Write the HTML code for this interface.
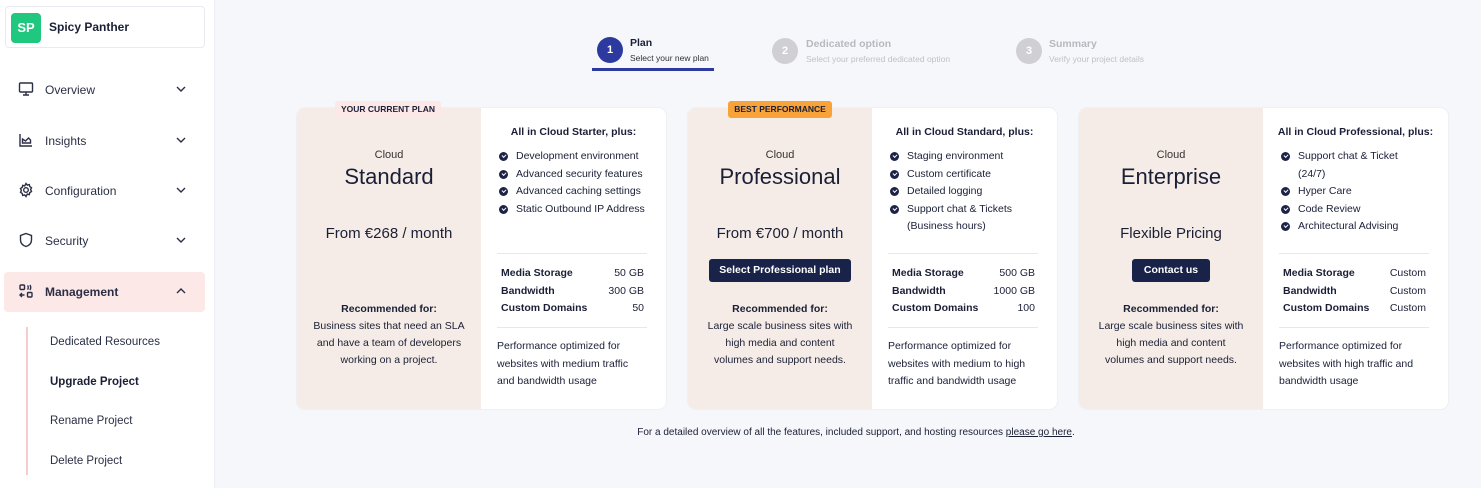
<!DOCTYPE html>
<html><head><style>
*{margin:0;padding:0;box-sizing:border-box}
body{width:1481px;height:488px;overflow:hidden;background:#f6f7fb;font-family:"Liberation Sans",sans-serif;color:#1a1f36;position:relative}
.abs{position:absolute}
.side{position:absolute;left:0;top:0;width:215px;height:488px;background:#fff;border-right:1px solid #eceef3}
.brand{position:absolute;left:5px;top:6px;width:200px;height:42px;border:1px solid #e8eaf0;border-radius:4px}
.sp{position:absolute;left:5px;top:6px;width:30px;height:30px;background:#20c77f;border-radius:4px;color:#fff;font-weight:bold;font-size:13px;text-align:center;line-height:30px}
.brand b{position:absolute;left:43px;top:13px;font-size:12px}
.nav{position:absolute;left:4px;width:201px;height:40px;font-size:12px;color:#2a2f45}
.nav .t{position:absolute;left:41px;top:13px}
.nav svg.i{position:absolute;left:14px;top:11px}
.nav svg.c{position:absolute;left:172px;top:15px}
.sub{position:absolute;left:50px;font-size:11.5px;color:#2a2f45}
.card{position:absolute;top:108px;width:369px;height:301px;border-radius:8px;background:#fff;overflow:visible;box-shadow:0 0 0 1px #eef0f4}
.lp{position:absolute;left:0;top:0;width:184px;height:301px;background:#f5ece7;border-radius:8px 0 0 8px;text-align:center}
.rp{position:absolute;left:184px;top:0;width:185px;height:301px;font-size:10.5px}
.cl{position:absolute;left:0;width:184px;top:41px;font-size:11px;color:#333}
.ti{position:absolute;left:0;width:184px;top:56px;font-size:22px;color:#1a1f36}
.pr{position:absolute;left:0;width:184px;top:117px;font-size:15px;color:#1a1f36}
.rec{position:absolute;left:0;width:184px;top:193px;font-size:10.5px;line-height:17px;color:#1a1f36}
.btn{position:absolute;top:151px;height:23px;background:#192349;color:#fff;font-weight:bold;font-size:10.5px;line-height:23px;border-radius:3px;text-align:center}
.h{position:absolute;left:0;width:185px;text-align:center;top:18px;font-weight:bold;font-size:10.5px}
ul{position:absolute;left:18px;top:40px;list-style:none;line-height:17.5px}
li{padding-left:17px;position:relative}
li:before{content:"";position:absolute;left:0;top:4px;width:9px;height:9px;border-radius:50%;background:#1c2346}
li:after{content:"";position:absolute;left:2.5px;top:6px;width:3px;height:2px;border-left:1.3px solid #fff;border-bottom:1.3px solid #fff;transform:rotate(-45deg)}
.dv{position:absolute;left:16px;width:150px;height:1px;background:#e8e8ec}
.sp2{position:absolute;left:20px;width:143px;top:157px;line-height:17.5px}
.sp2 div{display:flex;justify-content:space-between}
.sp2 span:first-child{font-weight:bold}
.pf{position:absolute;left:16px;top:230px;width:150px;line-height:17.5px}
.badge{position:absolute;top:-7px;height:17px;font-size:8.5px;font-weight:bold;line-height:17px;text-align:center;border-radius:3px}
</style></head><body>
<div class="side">
 <div class="brand"><div class="sp">SP</div><b>Spicy Panther</b></div>
 <div class="nav" style="top:70px"><svg class="i" width="16" height="16" viewBox="0 0 16 16" fill="none" stroke="#2a2f45" stroke-width="1.4"><rect x="1.5" y="2" width="13" height="9" rx="1"/><path d="M8 11v3M5 14h6"/></svg><span class="t">Overview</span><svg class="c" width="10" height="8" viewBox="0 0 10 8" fill="none" stroke="#2a2f45" stroke-width="1.4"><path d="M1 2l4 4 4-4"/></svg></div>
 <div class="nav" style="top:121px"><svg class="i" width="16" height="16" viewBox="0 0 16 16" fill="none" stroke="#2a2f45" stroke-width="1.4"><path d="M2 2v12h12M4.5 11V7l3 2 3-3 2 2v3z"/></svg><span class="t">Insights</span><svg class="c" width="10" height="8" viewBox="0 0 10 8" fill="none" stroke="#2a2f45" stroke-width="1.4"><path d="M1 2l4 4 4-4"/></svg></div>
 <div class="nav" style="top:171px"><svg class="i" width="16" height="16" viewBox="0 0 16 16" fill="none" stroke="#2a2f45" stroke-width="1.4"><circle cx="8" cy="8" r="2.3"/><path d="M8 1.5l1.3 1.6 2-.5.5 2 1.7 1.1-.9 1.9.9 1.9-1.7 1.1-.5 2-2-.5L8 14.5l-1.3-1.6-2 .5-.5-2-1.7-1.1.9-1.9-.9-1.9 1.7-1.1.5-2 2 .5z"/></svg><span class="t">Configuration</span><svg class="c" width="10" height="8" viewBox="0 0 10 8" fill="none" stroke="#2a2f45" stroke-width="1.4"><path d="M1 2l4 4 4-4"/></svg></div>
 <div class="nav" style="top:221px"><svg class="i" width="16" height="16" viewBox="0 0 16 16" fill="none" stroke="#2a2f45" stroke-width="1.4"><path d="M8 1.5l5.5 2v4.5c0 3.5-2.5 5.5-5.5 6.5-3-1-5.5-3-5.5-6.5V3.5z"/></svg><span class="t">Security</span><svg class="c" width="10" height="8" viewBox="0 0 10 8" fill="none" stroke="#2a2f45" stroke-width="1.4"><path d="M1 2l4 4 4-4"/></svg></div>
 <div class="nav" style="top:272px;background:#fde8e8;border-radius:4px"><svg class="i" width="16" height="16" viewBox="0 0 16 16" fill="none" stroke="#2a2f45" stroke-width="1.4"><rect x="2" y="2" width="4.5" height="4.5" rx="1"/><rect x="9.5" y="9.5" width="4.5" height="4.5" rx="1"/><path d="M9.5 2.5a3 3 0 010 4M12 2a5 5 0 010 5M6.5 12H2M4 10l-2 2 2 2"/></svg><span class="t" style="font-weight:bold">Management</span><svg class="c" width="10" height="8" viewBox="0 0 10 8" fill="none" stroke="#2a2f45" stroke-width="1.4"><path d="M1 6l4-4 4 4"/></svg></div>
 <div class="abs" style="left:26px;top:327px;width:1.5px;height:148px;background:#f7cccc"></div>
 <div class="sub" style="top:336px">Dedicated Resources</div>
 <div class="sub" style="top:376px;font-weight:bold;color:#1a1f36">Upgrade Project</div>
 <div class="sub" style="top:415px">Rename Project</div>
 <div class="sub" style="top:455px">Delete Project</div>
</div>

<!-- stepper -->
<div class="abs" style="left:597px;top:37px;width:26px;height:26px;border-radius:50%;background:#2c3aa0;color:#fff;font-weight:bold;font-size:11px;text-align:center;line-height:26px">1</div>
<div class="abs" style="left:630px;top:37px;font-size:10.5px;font-weight:bold">Plan</div>
<div class="abs" style="left:630px;top:53px;font-size:8.5px;color:#333">Select your new plan</div>
<div class="abs" style="left:592px;top:68px;width:122px;height:3px;background:#2c3aa0"></div>
<div class="abs" style="left:772px;top:38px;width:26px;height:26px;border-radius:50%;background:#d0d0d4;color:#fff;font-weight:bold;font-size:11px;text-align:center;line-height:26px">2</div>
<div class="abs" style="left:806px;top:38px;font-size:10.5px;font-weight:bold;color:#b8b8be">Dedicated option</div>
<div class="abs" style="left:806px;top:54px;font-size:8.5px;color:#c0c0c6">Select your preferred dedicated option</div>
<div class="abs" style="left:1016px;top:38px;width:26px;height:26px;border-radius:50%;background:#d0d0d4;color:#fff;font-weight:bold;font-size:11px;text-align:center;line-height:26px">3</div>
<div class="abs" style="left:1049px;top:38px;font-size:10.5px;font-weight:bold;color:#b8b8be">Summary</div>
<div class="abs" style="left:1049px;top:54px;font-size:8.5px;color:#c0c0c6">Verify your project details</div>

<!-- card 1 -->
<div class="card" style="left:297px">
 <div class="lp">
  <div class="cl">Cloud</div><div class="ti">Standard</div><div class="pr">From €268 / month</div>
  <div class="rec"><b>Recommended for:</b><br>Business sites that need an SLA<br>and have a team of developers<br>working on a project.</div>
 </div>
 <div class="badge" style="left:38px;width:106px;background:#fde8e8;color:#1a1f36">YOUR CURRENT PLAN</div>
 <div class="rp">
  <div class="h">All in Cloud Starter, plus:</div>
  <ul><li>Development environment</li><li>Advanced security features</li><li>Advanced caching settings</li><li>Static Outbound IP Address</li></ul>
  <div class="dv" style="top:145px"></div>
  <div class="sp2"><div><span>Media Storage</span><span>50 GB</span></div><div><span>Bandwidth</span><span>300 GB</span></div><div><span>Custom Domains</span><span>50</span></div></div>
  <div class="dv" style="top:219px"></div>
  <div class="pf">Performance optimized for websites with medium traffic and bandwidth usage</div>
 </div>
</div>

<!-- card 2 -->
<div class="card" style="left:688px">
 <div class="lp">
  <div class="cl">Cloud</div><div class="ti">Professional</div><div class="pr">From €700 / month</div>
  <div class="btn" style="left:21px;width:142px">Select Professional plan</div>
  <div class="rec"><b>Recommended for:</b><br>Large scale business sites with<br>high media and content<br>volumes and support needs.</div>
 </div>
 <div class="badge" style="left:40px;width:104px;background:#f7a33a;color:#1a1f36">BEST PERFORMANCE</div>
 <div class="rp">
  <div class="h">All in Cloud Standard, plus:</div>
  <ul><li>Staging environment</li><li>Custom certificate</li><li>Detailed logging</li><li>Support chat &amp; Tickets<br>(Business hours)</li></ul>
  <div class="dv" style="top:145px"></div>
  <div class="sp2"><div><span>Media Storage</span><span>500 GB</span></div><div><span>Bandwidth</span><span>1000 GB</span></div><div><span>Custom Domains</span><span>100</span></div></div>
  <div class="dv" style="top:219px"></div>
  <div class="pf">Performance optimized for websites with medium to high traffic and bandwidth usage</div>
 </div>
</div>

<!-- card 3 -->
<div class="card" style="left:1079px">
 <div class="lp">
  <div class="cl">Cloud</div><div class="ti">Enterprise</div><div class="pr">Flexible Pricing</div>
  <div class="btn" style="left:53px;width:78px">Contact us</div>
  <div class="rec"><b>Recommended for:</b><br>Large scale business sites with<br>high media and content<br>volumes and support needs.</div>
 </div>
 <div class="rp">
  <div class="h">All in Cloud Professional, plus:</div>
  <ul><li>Support chat &amp; Ticket<br>(24/7)</li><li>Hyper Care</li><li>Code Review</li><li>Architectural Advising</li></ul>
  <div class="dv" style="top:145px"></div>
  <div class="sp2"><div><span>Media Storage</span><span>Custom</span></div><div><span>Bandwidth</span><span>Custom</span></div><div><span>Custom Domains</span><span>Custom</span></div></div>
  <div class="dv" style="top:219px"></div>
  <div class="pf">Performance optimized for websites with high traffic and bandwidth usage</div>
 </div>
</div>

<div class="abs" style="left:0;width:1481px;padding-left:215px;top:427px;text-align:center;font-size:10px;color:#1a1f36">
 <span style="margin-left:16px">For a detailed overview of all the features, included support, and hosting resources <u>please go here</u>.</span>
</div>
</body></html>
